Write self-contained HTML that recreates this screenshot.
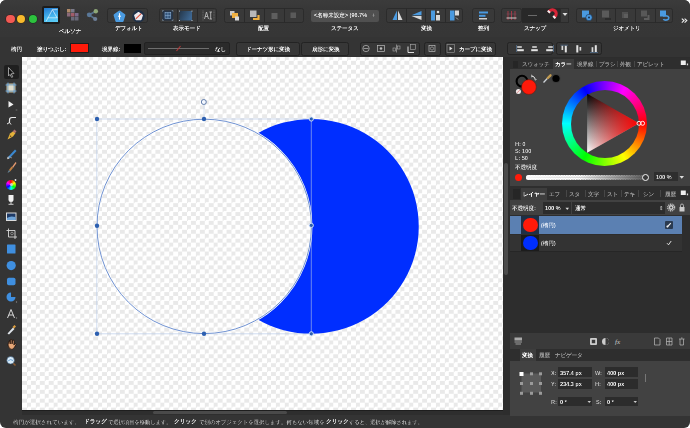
<!DOCTYPE html>
<html><head><meta charset="utf-8">
<style>
*{margin:0;padding:0;box-sizing:border-box}
html,body{width:690px;height:428px;overflow:hidden;background:#fff}
body{font-family:"Liberation Sans",sans-serif;color:#ddd;position:relative}
.a{position:absolute}
#win{position:absolute;left:0;top:0;width:690px;height:428px;background:#343434;border-radius:6px;overflow:hidden}
.t{position:absolute;font-size:12px;font-weight:bold;color:#f0f0f0;white-space:nowrap;line-height:14px;transform:scale(0.46);transform-origin:0 0;will-change:transform}
.grp{position:absolute;background:#393939;top:8px;height:15px;border-radius:2.5px;border:0.6px solid #2b2b2b}
.sep{position:absolute;width:1px;background:#2a2a2a}
#canvas{position:absolute;left:22px;top:57px;width:481px;height:353px;background:conic-gradient(#e9e9e9 25%,#fff 0 50%,#e9e9e9 0 75%,#fff 0) 0.05px -1.05px/8.9px 8.9px;overflow:hidden}
svg{position:absolute;overflow:visible}
.st{position:absolute;top:418.5px;font-size:12px;line-height:14px;color:#c0c0c0;white-space:nowrap;transform:scale(0.44,0.46);transform-origin:0 0;will-change:transform}
.sb{position:absolute;top:418.3px;font-size:12px;line-height:14px;font-weight:bold;color:#f8f8f8;white-space:nowrap;transform:scale(0.475,0.475);transform-origin:0 0;will-change:transform}
</style></head><body>
<div id="win">
 <!-- ===== TOOLBAR ===== -->
 <div class="a" style="left:0;top:0;width:690px;height:37px;background:linear-gradient(#3b3b3b,#373737 30%,#363636)"></div>
 <div class="a" style="left:6.4px;top:14.5px;width:8.2px;height:8.2px;border-radius:50%;background:#f25a54;box-shadow:0 0 0 0.6px #3a1a1a"></div>
 <div class="a" style="left:17.3px;top:14.5px;width:8.2px;height:8.2px;border-radius:50%;background:#f8ba2d;box-shadow:0 0 0 0.6px #3a2a10"></div>
 <div class="a" style="left:28.5px;top:14.5px;width:8.2px;height:8.2px;border-radius:50%;background:#2dc23e;box-shadow:0 0 0 0.6px #10301a"></div>

 <!-- personas -->
 <div class="a" style="left:42px;top:6px;width:18px;height:18px;background:#1c1c1c;border-radius:2px"></div>
 <div class="a" style="left:44px;top:7.5px;width:14px;height:14.5px;background:linear-gradient(165deg,#2379cf,#47b8ef 60%,#5fd0f7)"></div>
 <svg style="left:44px;top:7.5px" width="14" height="15"><path d="M2.1 13.4 L8.4 1.7 L13.6 1.7 M3.6 9.8 L13.4 9.8 M8.4 1.7 L13.1 9.8" stroke="#fff" stroke-width="0.65" fill="none" opacity="0.9"/></svg>
 <svg style="left:66px;top:8px" width="14" height="13">
  <rect x="1" y="1" width="3.5" height="3.5" fill="#b08a6a"/><rect x="5" y="1" width="3.5" height="3.5" fill="#7a7a8a"/>
  <rect x="1" y="5" width="3.5" height="3.5" fill="#8a6a7a"/><rect x="5" y="5" width="3.5" height="3.5" fill="#a25d6a"/><rect x="9" y="5" width="3.5" height="3.5" fill="#7b6a8a"/>
  <rect x="5" y="9" width="3.5" height="3.5" fill="#6a6a7a"/><rect x="9" y="9" width="3.5" height="3.5" fill="#6a6a7a"/>
 </svg>
 <svg style="left:86px;top:8px" width="14" height="14">
  <path d="M3.2 6.8 L9.8 3.2 M3.2 6.8 L9.2 11" stroke="#56708a" stroke-width="1.6"/>
  <circle cx="3.2" cy="6.8" r="2.4" fill="#5a7898"/><circle cx="9.8" cy="3.2" r="2.2" fill="#8fa878"/><circle cx="9.2" cy="11" r="2.1" fill="#6d7f98"/>
 </svg>
 <div class="t" style="left:58.5px;top:28px">ペルソナ</div>

 <!-- default group -->
 <div class="grp" style="left:107px;width:41px"></div>
 <svg style="left:112.5px;top:9.5px" width="13" height="13"><path d="M6.5 1.6 L11.4 5.1 L9.6 10.9 L3.4 10.9 L1.6 5.1 Z" fill="#4b9be0" stroke="#4b9be0" stroke-width="2" stroke-linejoin="round"/><path d="M6.5 3.2 V9.6 M5 6.2 H8" stroke="#fff" stroke-width="1"/></svg>
 <svg style="left:132px;top:9.5px" width="13" height="13"><circle cx="6.5" cy="6.3" r="6.2" fill="#1f3047"/><path d="M6.5 2.6 L10.2 5.3 L8.8 9.6 L4.2 9.6 L2.8 5.3 Z" fill="#eceaf0" stroke="#eceaf0" stroke-width="1.4" stroke-linejoin="round"/><path d="M3.8 8.8 L9.2 3.6" stroke="#e0503a" stroke-width="1.1"/></svg>
 <div class="t" style="left:114.5px;top:25px">デフォルト</div>

 <!-- view mode group -->
 <div class="grp" style="left:159px;width:58px"></div>
 <div class="sep" style="left:177px;top:8px;height:15px"></div>
 <div class="sep" style="left:197px;top:8px;height:15px"></div>
 <svg style="left:161px;top:9px" width="14" height="13"><rect x="1.5" y="1.5" width="10.5" height="10" fill="#263548"/><rect x="4" y="3.5" width="5.8" height="6" fill="#34557a" stroke="#9cc0e6" stroke-width="0.5"/><path d="M4 6.5 H9.8 M6.9 3.5 V9.5" stroke="#9cc0e6" stroke-width="0.45"/><path d="M1.5 1.5h1.3M1.5 1.5v1.3M12 1.5h-1.3M12 1.5v1.3M1.5 11.5h1.3M1.5 11.5v-1.3M12 11.5h-1.3M12 11.5v-1.3" stroke="#8a9aaa" stroke-width="0.6"/></svg>
 <svg style="left:178px;top:9px" width="16" height="13"><defs><linearGradient id="vg2" x1="0" x2="1" y1="0" y2="0.4"><stop offset="0" stop-color="#25374a"/><stop offset="1" stop-color="#3d6690"/></linearGradient></defs><rect x="1.5" y="2" width="12.5" height="9.5" fill="url(#vg2)"/><g fill="#c8d4e0"><circle cx="1.5" cy="2" r="0.6"/><circle cx="14" cy="2" r="0.6"/><circle cx="1.5" cy="11.5" r="0.6"/><circle cx="14" cy="11.5" r="0.6"/></g></svg>
 <svg style="left:201px;top:9px" width="15" height="13"><path d="M2 1.5 V11.5 M13 1.5 V11.5" stroke="#8a8a8a" stroke-width="0.6" stroke-dasharray="1 0.6"/><path d="M3.5 10 L5.5 3 L7.5 10 M4.2 7.5 H6.8 M8.5 3 H11 M9.7 3 V10 M8.5 10 H11" stroke="#c8c8c8" stroke-width="0.8" fill="none"/></svg>
 <div class="t" style="left:172.5px;top:25px">表示モード</div>

 <!-- arrange group -->
 <div class="grp" style="left:224px;width:80px"></div>
 <div class="sep" style="left:244px;top:8px;height:15px"></div>
 <div class="sep" style="left:264px;top:8px;height:15px"></div>
 <div class="sep" style="left:284px;top:8px;height:15px"></div>
 <svg style="left:228px;top:9px" width="13" height="13"><rect x="2" y="2" width="4.5" height="4.5" fill="#c9c9c9"/><rect x="4" y="4" width="6" height="5" fill="#f0b040"/><rect x="7" y="7.5" width="4" height="4" fill="#dcdcdc"/></svg>
 <svg style="left:248px;top:9px" width="13" height="13"><rect x="2" y="1.5" width="6.5" height="6.5" fill="#b8b8b8"/><path d="M10.5 6 V10 H5" stroke="#f0b040" stroke-width="2.2" fill="none"/></svg>
 <svg style="left:268px;top:9px" width="13" height="13"><rect x="3.5" y="4" width="6" height="6" fill="#5e5e5e"/></svg>
 <svg style="left:287px;top:9px" width="13" height="13"><rect x="3.5" y="3.5" width="5.5" height="5.5" fill="#5a5a5a"/></svg>
 <div class="t" style="left:257.5px;top:25px">配置</div>

 <!-- status -->
 <div class="a" style="left:311px;top:9.5px;width:68px;height:12px;background:#505050;border-radius:2px"></div>
 <div class="t" style="left:313.5px;top:12px;color:#e0e0e0">&lt;名称未設定&gt; (96.7%</div>
 <div class="t" style="left:372px;top:12px;color:#9a9a9a">+</div>
 <div class="t" style="left:331px;top:25px">ステータス</div>

 <!-- transform group -->
 <div class="grp" style="left:386px;width:77px"></div>
 <div class="sep" style="left:406px;top:8px;height:15px"></div>
 <div class="sep" style="left:425px;top:8px;height:15px"></div>
 <div class="sep" style="left:445px;top:8px;height:15px"></div>
 <svg style="left:391px;top:9px" width="13" height="13"><path d="M6 1.5 L1.5 11 H6 Z" fill="#4a9ae0"/><path d="M7 1.5 L11.5 11 H7 Z" fill="#d8d8d8"/></svg>
 <svg style="left:410px;top:9px" width="13" height="13"><path d="M11.5 2 L1.5 6.2 H11.5 Z" fill="#4a9ae0"/><path d="M11.5 11 L1.5 7 H11.5 Z" fill="#d8d8d8"/></svg>
 <svg style="left:429px;top:9px" width="13" height="13"><rect x="2" y="1.5" width="4" height="10" fill="#4a9ae0"/><rect x="7" y="6" width="4" height="5.5" fill="#d8d8d8"/><circle cx="9" cy="3" r="1.3" fill="#d8d8d8"/></svg>
 <svg style="left:448px;top:9px" width="13" height="13"><rect x="2" y="1.5" width="4.5" height="10" fill="#4a9ae0"/><rect x="7" y="1.5" width="4" height="5" fill="#d8d8d8"/><path d="M8 8.5 L10 10.5" stroke="#ccc" stroke-width="0.8"/></svg>
 <div class="t" style="left:420.5px;top:25px">変換</div>

 <!-- align group -->
 <div class="grp" style="left:472px;width:23px"></div>
 <svg style="left:477px;top:9px" width="13" height="13"><rect x="2" y="2.5" width="9" height="2" fill="#4a9ae0"/><rect x="2" y="5.8" width="6.5" height="2" fill="#4a9ae0"/><rect x="2" y="9" width="8" height="1.5" fill="#d0d0d0"/></svg>
 <div class="t" style="left:478px;top:25px">整列</div>

 <!-- snap group -->
 <div class="grp" style="left:501px;width:21px"></div>
 <div class="a" style="left:522px;top:8px;width:38px;height:15px;background:#282828"></div>
 <div class="grp" style="left:560px;width:9px;border-radius:0"></div>
 <svg style="left:505px;top:9px" width="13" height="13"><path d="M3 2 V11 M6.5 2 V11 M10 2 V11" stroke="#b03848" stroke-width="0.9"/><path d="M1.5 9 H11.5" stroke="#cfcfcf" stroke-width="1"/><path d="M1.5 5 H11.5" stroke="#7a5060" stroke-width="0.6"/></svg>
 <div class="a" style="left:527.5px;top:14.5px;width:9px;height:1.5px;background:#6a6a6a"></div>
 <svg style="left:544px;top:8px;transform:rotate(90deg)" width="14" height="14"><path d="M3.2 10.8 L1.8 9.4 A4.6 4.6 0 0 1 9.4 1.8 L10.8 3.2 L8.6 5.4 L7.2 4 A1.6 1.6 0 0 0 4 7.2 L5.4 8.6 Z" fill="#d92638"/><path d="M1.9 9.5 L3.3 10.9 L5.5 8.7 L4.1 7.3 Z M7.3 4.1 L8.7 5.5 L10.9 3.3 L9.5 1.9 Z" fill="#f0f0f0"/></svg>
 <svg style="left:562px;top:12px" width="6" height="5"><path d="M0.5 1 L5.5 1 L3 4 Z" fill="#ddd"/></svg>
 <div class="t" style="left:524px;top:25px">スナップ</div>

 <!-- geometry group -->
 <div class="grp" style="left:576px;width:97px"></div>
 <div class="sep" style="left:596px;top:8px;height:15px"></div>
 <div class="sep" style="left:615px;top:8px;height:15px"></div>
 <div class="sep" style="left:635px;top:8px;height:15px"></div>
 <div class="sep" style="left:655px;top:8px;height:15px"></div>
 <svg style="left:580px;top:9px" width="13" height="13"><rect x="2" y="1.5" width="7" height="7" fill="#4a9ae0"/><circle cx="9" cy="8.5" r="3.2" fill="#4a9ae0" stroke="#1a3050" stroke-width="0.6"/><circle cx="9" cy="8.5" r="1" fill="#1a3050"/></svg>
 <svg style="left:600px;top:9px" width="13" height="13"><rect x="2" y="1.5" width="7" height="7" fill="#5a5a5a"/><path d="M5 10 H11" stroke="#1f1f1f" stroke-width="1"/></svg>
 <svg style="left:619px;top:9px" width="13" height="13"><rect x="3" y="3" width="6" height="6" fill="#505050"/><rect x="5" y="5" width="4" height="4" fill="#5e5e5e"/></svg>
 <svg style="left:639px;top:9px" width="13" height="13"><rect x="2" y="1.5" width="6" height="6" fill="#585858"/><path d="M9.5 6 V10 H5" stroke="#5e5e5e" stroke-width="2" fill="none"/></svg>
 <svg style="left:658px;top:9px" width="13" height="13"><rect x="2" y="1.5" width="6" height="6" fill="#4a9ae0"/><path d="M5 7 C10 6 11.5 8 10.5 10 C9.5 11.5 6 11.5 5.5 10" stroke="#4a9ae0" stroke-width="1.6" fill="none"/></svg>
 <div class="t" style="left:612.5px;top:25px">ジオメトリ</div>
 <svg style="left:680.5px;top:18px" width="8" height="6"><path d="M0.8 0.6 L3 2.6 L0.8 4.6 M3.6 0.6 L5.8 2.6 L3.6 4.6" stroke="#f0f0f0" stroke-width="1.1" fill="none"/></svg>

 <!-- ===== CONTEXT BAR ===== -->
 <div class="t" style="left:10.5px;top:46px">楕円</div>
  <div class="t" style="left:37px;top:46px">塗りつぶし:</div>
 <div class="a" style="left:69.5px;top:43.4px;width:19.3px;height:10px;background:#ff1a0a;border:0.6px solid #1e1e1e"></div>
 <div class="t" style="left:102px;top:46px">境界線:</div>
 <div class="a" style="left:124px;top:43.8px;width:16.6px;height:9.5px;background:#000"></div>
 <div class="a" style="left:143.5px;top:42px;width:86px;height:13px;background:#2b2b2b;border:0.6px solid #222;border-radius:2px"></div>
 <div class="a" style="left:148px;top:48.2px;width:61px;height:1px;background:#6e6e6e"></div>
 <svg style="left:174px;top:44px" width="9" height="9"><path d="M2.5 7 L6.5 2" stroke="#b83838" stroke-width="1.1"/></svg>
 <div class="t" style="left:214.5px;top:46px">なし</div>

 <div class="a" style="left:236px;top:41.5px;width:64px;height:14px;background:#373737;border:0.8px solid #232323;border-radius:2.5px"></div>
 <div class="t" style="left:246px;top:46px">ドーナツ形に変換</div>
 <div class="a" style="left:301px;top:41.5px;width:48px;height:14px;background:#373737;border:0.8px solid #232323;border-radius:2.5px"></div>
 <div class="t" style="left:312px;top:46px">扇形に変換</div>

 <div class="a" style="left:360px;top:41.5px;width:60px;height:14px;background:#373737;border:0.8px solid #232323;border-radius:2.5px"></div>
 <svg style="left:361px;top:43px" width="60" height="11">
  <circle cx="5" cy="5.5" r="3.2" stroke="#bbb" stroke-width="0.7" fill="none"/><path d="M2.5 5.5 H7.5" stroke="#bbb" stroke-width="0.7"/>
  <rect x="16.5" y="2.5" width="7" height="6" stroke="#bbb" stroke-width="0.7" fill="none"/><circle cx="20" cy="5.5" r="1.3" fill="#bbb"/>
  <path d="M35.5 1.5 V9.5" stroke="#aaa" stroke-width="0.7"/><rect x="32" y="5" width="2.5" height="3" fill="none" stroke="#aaa" stroke-width="0.6"/><rect x="36.5" y="3" width="2.5" height="3" fill="none" stroke="#aaa" stroke-width="0.6"/>
  <rect x="49.5" y="1.5" width="5" height="5" stroke="#aaa" stroke-width="0.6" fill="none"/><path d="M47 3.5 V9.5 H53" stroke="#eee" stroke-width="0.9" fill="none"/>
 </svg>
 <div class="a" style="left:424px;top:41.5px;width:16.5px;height:14px;background:#373737;border:0.8px solid #232323;border-radius:2.5px"></div>
 <svg style="left:426px;top:43px" width="12" height="11"><rect x="3" y="2.5" width="6" height="6" stroke="#bbb" stroke-width="0.7" fill="none"/><circle cx="6" cy="5.5" r="1.6" stroke="#bbb" stroke-width="0.6" fill="none"/></svg>
 <div class="a" style="left:445px;top:41.5px;width:51px;height:14px;background:#373737;border:0.8px solid #232323;border-radius:2.5px"></div>
 <svg style="left:446px;top:43px" width="10" height="11"><rect x="1" y="1.5" width="7.5" height="8" stroke="#999" stroke-width="0.6" fill="none"/><path d="M3.5 3.5 L6.5 5.5 L3.5 7.5 Z" fill="#ddd"/></svg>
 <div class="t" style="left:459px;top:46px">カーブに変換</div>

 <!-- align buttons in right context -->
 <div class="a" style="left:507.2px;top:42px;width:46.2px;height:12.7px;background:#373737;border:0.8px solid #232323;border-radius:2.5px"></div>
 <div class="a" style="left:555.8px;top:42px;width:46.2px;height:12.7px;background:#373737;border:0.8px solid #232323;border-radius:2.5px"></div>
 <svg style="left:505px;top:40px" width="100" height="16">
  <path d="M11.5 5 V12" stroke="#5a7fa8" stroke-width="0.6"/>
  <rect x="12.2" y="6.2" width="4.6" height="1.6" fill="#d8d8d8"/><rect x="12.2" y="9.2" width="6.6" height="2" fill="#e4e4e4"/>
  <rect x="27.2" y="6.2" width="4.6" height="1.6" fill="#d8d8d8"/><rect x="26.2" y="9.2" width="6.6" height="2" fill="#e4e4e4"/>
  <path d="M48.5 5 V12" stroke="#5a7fa8" stroke-width="0.6"/>
  <rect x="43.2" y="6.2" width="4.6" height="1.6" fill="#d8d8d8"/><rect x="41.2" y="9.2" width="6.6" height="2" fill="#e4e4e4"/>
  <path d="M55.5 5.2 H63" stroke="#5a7fa8" stroke-width="0.6"/>
  <rect x="56.5" y="5.8" width="1.7" height="4.2" fill="#d8d8d8"/><rect x="59.8" y="5.8" width="2" height="6.6" fill="#e4e4e4"/>
  <rect x="71.3" y="5.2" width="2" height="7.3" fill="#e4e4e4"/><rect x="74.5" y="7" width="1.7" height="3.6" fill="#d8d8d8"/>
  <path d="M85 12.5 H93" stroke="#5a7fa8" stroke-width="0.6"/>
  <rect x="86.6" y="7.2" width="1.7" height="4.8" fill="#d8d8d8"/><rect x="89.8" y="5.2" width="2" height="6.8" fill="#e4e4e4"/>
 </svg>

 <!-- ===== LEFT TOOLS ===== -->
 <div class="a" style="left:4px;top:65px;width:15px;height:13.5px;background:#1f1f1f;border-radius:2px"></div>
 <svg style="left:0;top:57px" width="22" height="320">
  <!-- move (y 14.5) -->
  <path d="M8.5 10.5 L14 16.5 L11.2 16.8 L12.8 19.8 L11.6 20.4 L10 17.4 L8.5 19 Z" fill="#111" stroke="#a8a8a8" stroke-width="0.9" stroke-linejoin="round"/>
  <!-- artboard (31) -->
  <rect x="6.5" y="26.5" width="9" height="9" fill="#cdbf9a"/>
  <path d="M5.5 28 H16.5 M5.5 34 H16.5 M8 25.5 V36.5 M14 25.5 V36.5" stroke="#5a9ad8" stroke-width="0.9"/>
  <rect x="8.5" y="28.5" width="5" height="5" fill="#e0dccb"/>
  <!-- node (47.5) -->
  <path d="M8.5 44 L13.5 47.5 L8.5 50.5 Z" fill="#f0f0f0"/>
  <circle cx="16.5" cy="53" r="1" fill="#555"/>
  <!-- corner (63) -->
  <path d="M16 60.5 H12 Q9.5 60.5 9.5 63 V66" stroke="#e8e8e8" stroke-width="1.2" fill="none"/>
  <path d="M7 67 L9.5 65.5 L11 67.5" stroke="#e8e8e8" stroke-width="1" fill="none"/>
  <!-- pen (78) -->
  <path d="M7.5 82.5 L10 76.5 L13.5 74 L15.5 76 L13 79.5 Z" fill="#e4b23a"/>
  <path d="M12.5 74.5 L14.5 72.5 L16.5 74.5 L15 76" fill="#b0706a"/>
  <circle cx="10.6" cy="79.3" r="0.8" fill="#6a4a1a"/>
  <!-- pencil (95.5) -->
  <path d="M8 100 L15 92.5 L16.5 94 L9.5 101.5 Z" fill="#3a88d0"/>
  <path d="M8 100 L9.5 101.5 L7 102.3 Z" fill="#ddd"/>
  <path d="M7 100.5 Q10 99 12 101" stroke="#ddd" stroke-width="0.5" fill="none"/>
  <!-- brush (111) -->
  <path d="M12 110 L15.5 105 L16.5 106 L13 111 Z" fill="#e59a70"/>
  <path d="M9 113 L11.5 109.5 L13 111 L10 114.5 Z" fill="#c08040"/>
  <path d="M7.5 116 L9 113 L10 114.5 Z" fill="#6a8aa0"/>
  <!-- color wheel (127.5) -->
    <circle cx="15.5" cy="123" r="0.9" fill="#eee"/>
  <!-- transparency (142.5) -->
  <path d="M8.5 138 H13.5 V142.5 Q13.5 145 11 145 Q8.5 145 8.5 142.5 Z" fill="#f0f0f0"/>
  <path d="M11 145 V147 M8.5 147.3 H13.5" stroke="#e0e0e0" stroke-width="0.9"/>
  <!-- place image (159.8) -->
  <rect x="6" y="155.5" width="10.5" height="8.5" fill="#dcdcdc"/>
  <rect x="7" y="156.5" width="8.5" height="6.5" fill="#1e3a66"/>
  <path d="M7 161 Q10 158.5 15.5 160 V163 H7 Z" fill="#6ea4d8"/>
  <!-- crop (176) -->
  <path d="M8.5 171.5 V180 H17 M6.5 173.5 H15 V182" stroke="#d8d8d8" stroke-width="0.9" fill="none"/>
  <circle cx="12" cy="176.5" r="1.3" fill="none" stroke="#bbb" stroke-width="0.6"/>
  <!-- rectangle (192) -->
  <rect x="7" y="187.5" width="8.5" height="9" fill="#3f8fe0" rx="0.5"/>
  <!-- ellipse (208.5) -->
  <circle cx="11.2" cy="208.6" r="4.6" fill="#3f8fe0"/>
  <!-- rounded rect (224.5) -->
  <rect x="7" y="220.8" width="8.5" height="7.5" rx="1.8" fill="#3f8fe0"/>
  <!-- pie (240) -->
  <path d="M11 240 L15.5 240 A4.5 4.5 0 1 1 11 235.5 Z" fill="#3f8fe0"/>
  <circle cx="16.5" cy="245" r="0.7" fill="#888"/>
  <!-- text (257) -->
  <path d="M7.5 261 L11 252.5 L14.5 261 M8.8 258 H13.2" stroke="#e8e8e8" stroke-width="0.9" fill="none"/>
  <circle cx="16.5" cy="261" r="0.7" fill="#888"/>
  <!-- fill/eyedropper (271.7) -->
  <path d="M7.5 276.5 L13 270.5 L14.5 272 L9 277.5 Z" fill="#dfe4ea"/>
  <path d="M12.5 270 L14.5 268 L16 269.5 L14 271.5 Z" fill="#e0a040"/>
  <!-- hand (288) -->
  <path d="M8 288 Q8.5 284.5 9.5 283.5 L10.2 287 L10.5 282.5 L11.8 282.5 L12 287 L13 283 L14.2 283.5 L13.8 288 L15.5 286.5 L16 287.3 Q14.5 291.5 12 292.5 Q9 292.5 8 288 Z" fill="#e8a878" stroke="#1a0a05" stroke-width="0.7"/>
  <!-- zoom (304) -->
  <path d="M13 306 L15.5 308.5" stroke="#8a5a30" stroke-width="1.6"/>
  <circle cx="10.6" cy="303.3" r="3.8" fill="#d8ecfa" stroke="#2a4a6a" stroke-width="0.6"/>
  <path d="M8.2 303.8 Q10.5 301.5 13 303.5" stroke="#6aa0d0" stroke-width="1" fill="none"/>
  <defs><radialGradient id="dummy"/></defs>
 </svg>
 <div class="a" style="left:6px;top:179.5px;width:10px;height:10px;border-radius:50%;background:conic-gradient(#f00,#ff0,#0f0,#0ff,#00f,#f0f,#f00)"></div>
 <div class="a" style="left:9.5px;top:183px;width:3px;height:3px;border-radius:50%;background:#ccc"></div>

 <!-- ===== CANVAS ===== -->
 <div id="canvas">
  <svg width="481" height="353" style="left:0;top:0">
   <path d="M235.8 76.3 A107.4 107.4 0 1 1 235.8 262.5 A107.4 107.4 0 0 0 235.8 76.3 Z" fill="#002eff"/>
   <path d="M74.8 62 H289.3 V276.8 H74.8 Z" fill="none" stroke="#b0c4e6" stroke-width="0.6"/>
   <circle cx="182.2" cy="169.4" r="107.2" fill="none" stroke="#fff" stroke-width="2"/>
   <circle cx="182.2" cy="169.4" r="107.2" fill="none" stroke="#3f6cc0" stroke-width="0.75"/>
   <path d="M182 62 V47.5" stroke="#c4d4ee" stroke-width="0.6"/>
   <circle cx="181.8" cy="45" r="2.5" fill="#f4f8ff" stroke="#3d5f98" stroke-width="0.8"/>
   <g fill="#2c5fb0">
    <circle cx="75" cy="62" r="2.2"/><circle cx="182" cy="62" r="2.2"/>
    <circle cx="75" cy="168.8" r="2.2"/>
    <circle cx="75" cy="276.8" r="2.2"/><circle cx="182" cy="276.8" r="2.2"/>
   </g>
   <g fill="#2c5fb0" stroke="#d8e6ff" stroke-width="0.9">
    <circle cx="289.3" cy="62" r="2.1"/><circle cx="289.3" cy="168.4" r="2.1"/><circle cx="289.3" cy="276.8" r="2.1"/>
   </g>
  </svg>
 </div>
 <!-- canvas bottom strip + scrollbar -->
 <div class="a" style="left:22px;top:410px;width:481px;height:5px;background:#2e2e2e;border-top:0.6px solid #1e1e1e"></div>
 <div class="a" style="left:153px;top:411.3px;width:133.5px;height:3.2px;background:#4a4a4a;border-radius:1.5px"></div>

 <!-- ===== RIGHT PANEL ===== -->
 <div class="a" style="left:503px;top:57px;width:187px;height:358px;background:#2d2d2d"></div>
 <div class="a" style="left:504px;top:162.6px;width:4.2px;height:112px;background:#4c4c4c;border-radius:2px"></div>

 <!-- colour panel -->
 <div class="a" style="left:510px;top:58px;width:180px;height:11px;background:#2e2e2e"></div>
 <div class="a" style="left:510px;top:69px;width:180px;height:117px;background:#414141"></div>
 <div class="a" style="left:553.3px;top:58.5px;width:20.7px;height:10.5px;background:#3d3d3d"></div>
 <div class="t" style="left:522px;top:61px;color:#9a9a9a">スウォッチ</div>
 <div class="t" style="left:555px;top:61px;color:#fff">カラー</div>
 <div class="t" style="left:577px;top:61px;color:#9a9a9a">境界線</div>
 <div class="t" style="left:598.5px;top:61px;color:#9a9a9a">ブラシ</div>
 <div class="t" style="left:620px;top:61px;color:#9a9a9a">外観</div>
 <div class="t" style="left:637px;top:61px;color:#9a9a9a">アピレット</div>
 <svg style="left:680px;top:60px" width="10" height="8"><rect x="0.8" y="0.5" width="5" height="4.5" fill="#eee"/><rect x="6.8" y="3.5" width="1.3" height="1.8" fill="#ddd"/></svg>

 <svg style="left:510px;top:69px" width="180" height="117">
  <circle cx="12" cy="12.2" r="5.4" fill="none" stroke="#000" stroke-width="2.1"/>
  <circle cx="18.9" cy="18" r="7.4" fill="#ff1a0a" stroke="#5a1a10" stroke-width="0.5"/>
  <path d="M21.5 7 Q24.5 7 25.5 10.5" stroke="#e0e0e0" stroke-width="1" fill="none"/><path d="M21 5.8 L22.5 7 L21 8.2 M24.3 10 L25.5 11.2 L26.6 10" stroke="#e0e0e0" stroke-width="0.7" fill="none"/>
  <circle cx="8.4" cy="22.5" r="2.5" fill="#f0e8e8"/><path d="M7 23.9 L9.8 21.1" stroke="#d44" stroke-width="0.5"/>
  <path d="M33.5 13.5 L38.5 8.3" stroke="#cfd4da" stroke-width="1.3"/><path d="M37.8 9 L40.5 6.3" stroke="#c09a50" stroke-width="2.4" stroke-linecap="round"/>
  <circle cx="46" cy="9.5" r="4.6" fill="#3a3a3a"/>
  <circle cx="46" cy="9.5" r="3.6" fill="#000"/>
 </svg>
 <div class="a" id="wheel" style="left:562px;top:81px;width:85px;height:85px;border-radius:50%;background:conic-gradient(from 90deg,#f00,#ff0,#0f0,#0ff,#00f,#f0f,#f00)"></div>
 <div class="a" style="left:570.5px;top:89.5px;width:68px;height:68px;border-radius:50%;background:#414141"></div>
 <svg style="left:510px;top:69px" width="180" height="117">
  <defs>
   <linearGradient id="tg1" x1="0" y1="0" x2="0" y2="1"><stop offset="0" stop-color="#000"/><stop offset="1" stop-color="#fff"/></linearGradient>
   <linearGradient id="tg2" x1="0" y1="0" x2="1" y2="0"><stop offset="0" stop-color="#f00" stop-opacity="0"/><stop offset="1" stop-color="#f00" stop-opacity="1"/></linearGradient>
  </defs>
  <path d="M77.1 24.8 L129 54.3 L77.1 83.7 Z" fill="url(#tg1)"/>
  <path d="M77.1 24.8 L129 54.3 L77.1 83.7 Z" fill="url(#tg2)" style="mix-blend-mode:normal"/>
  <circle cx="129" cy="54.3" r="2" fill="none" stroke="#fff" stroke-width="0.9"/>
  <circle cx="132.6" cy="54.3" r="2" fill="none" stroke="#fff" stroke-width="0.9"/>
 </svg>
 <div class="t" style="left:514.5px;top:141px;color:#cfcfcf">H: 0</div>
 <div class="t" style="left:514.5px;top:148px;color:#cfcfcf">S: 100</div>
 <div class="t" style="left:514.5px;top:155px;color:#cfcfcf">L: 50</div>
 <div class="t" style="left:514.5px;top:164px;color:#cfcfcf">不透明度</div>
 <div class="a" style="left:515px;top:173.5px;width:7px;height:7px;border-radius:50%;background:#ff1a0a"></div>
 <div class="a" style="left:525.7px;top:174.5px;width:119px;height:5px;border-radius:2.5px;background:conic-gradient(#aaa 25%,#fff 0 50%,#aaa 0 75%,#fff 0) 0 0/2.5px 2.5px"></div>
 <div class="a" style="left:525.7px;top:174.5px;width:119px;height:5px;border-radius:2.5px;background:linear-gradient(90deg,rgba(255,255,255,0.85),rgba(255,255,255,0.1) 45%,rgba(40,40,40,0.75))"></div>
 <div class="a" style="left:641.7px;top:173.5px;width:7px;height:7px;border-radius:50%;border:1.1px solid #f4f4f4;background:#3a3a3a"></div>
 <div class="a" style="left:653.5px;top:172.3px;width:24px;height:8.5px;background:#2e2e2e"></div>
 <div class="t" style="left:656px;top:173.5px;color:#ddd">100 %</div>
 <svg style="left:679px;top:175px" width="6" height="5"><path d="M0.5 1 L5 1 L2.75 3.8 Z" fill="#ddd"/></svg>

 <!-- layers panel -->
 <div class="a" style="left:510px;top:186px;width:180px;height:14px;background:#2e2e2e"></div>
 <div class="a" style="left:513px;top:189px;width:7px;height:10px;background:#262626"></div>
 <div class="a" style="left:520.7px;top:188px;width:26px;height:12px;background:#3d3d3d"></div>
 <div class="t" style="left:522.5px;top:190.5px;color:#fff">レイヤー</div>
 <div class="t" style="left:549px;top:190.5px;color:#9a9a9a">エフ</div>
 <div class="t" style="left:569px;top:190.5px;color:#9a9a9a">スタ</div>
 <div class="t" style="left:588px;top:190.5px;color:#9a9a9a">文字</div>
 <div class="t" style="left:607px;top:190.5px;color:#9a9a9a">スト</div>
 <div class="t" style="left:624px;top:190.5px;color:#9a9a9a">テキ</div>
 <div class="t" style="left:643px;top:190.5px;color:#9a9a9a">シン</div>
 <div class="t" style="left:664.5px;top:190.5px;color:#9a9a9a">履歴</div>
 <svg style="left:680px;top:189.5px" width="10" height="8"><rect x="0.8" y="0.5" width="5" height="4.5" fill="#eee"/><rect x="6.8" y="3.5" width="1.3" height="1.8" fill="#ddd"/></svg>
 <div class="a" style="left:510px;top:200px;width:180px;height:15px;background:#414141"></div>
 <div class="t" style="left:511.7px;top:205px;color:#d8d8d8">不透明度:</div>
 <div class="a" style="left:542.5px;top:201.5px;width:28px;height:12px;background:#2c2c2c"></div>
 <div class="t" style="left:545px;top:205px;color:#eee">100 %</div>
 <svg style="left:565px;top:206.5px" width="5" height="4"><path d="M0.5 0.8 L4 0.8 L2.25 3 Z" fill="#ddd"/></svg>
 <div class="a" style="left:572px;top:201.5px;width:92.5px;height:12px;background:#2c2c2c"></div>
 <div class="t" style="left:574.7px;top:205px;color:#eee">通常</div>
 <div class="t" style="left:659px;top:205px;color:#aaa">⇕</div>
 <svg style="left:666px;top:202px" width="24" height="11"><circle cx="5.2" cy="5.5" r="3.4" fill="none" stroke="#d0d0d0" stroke-width="1.3" stroke-dasharray="1.1 0.68"/><circle cx="5.2" cy="5.5" r="2.4" fill="#d0d0d0"/><circle cx="5.2" cy="5.5" r="1" fill="#414141"/><rect x="13.5" y="5" width="5" height="4.5" fill="#ccc"/><path d="M14.5 5 V3.5 A1.5 1.5 0 0 1 17.5 3.5 V5" stroke="#ccc" stroke-width="0.8" fill="none"/></svg>
 <div class="a" style="left:510px;top:215px;width:172px;height:118px;background:#2d2d2d"></div>
 <div class="a" style="left:510px;top:234.5px;width:172px;height:16.8px;background:#333"></div>
 <div class="a" style="left:510.4px;top:216.2px;width:171.6px;height:17.4px;background:#5b80b2"></div>
 <div class="a" style="left:521px;top:216.2px;width:17.5px;height:17.4px;background:#1e2f46"></div>
 <div class="a" style="left:523px;top:217.5px;width:14.5px;height:14.5px;border-radius:50%;background:#ff1a0a"></div>
 <div class="t" style="left:541.2px;top:221.5px;color:#e8eef8">(楕円)</div>
 <div class="a" style="left:664.5px;top:220.5px;width:8px;height:8px;background:#2a3a50;border-radius:1px"></div>
 <svg style="left:664.5px;top:220.5px" width="8" height="8"><path d="M2.2 6 L5.8 2.2" stroke="#eee" stroke-width="1.1"/><circle cx="2.4" cy="5.6" r="1" fill="#eee"/></svg>
 <div class="a" style="left:521px;top:234.5px;width:17.5px;height:17px;background:#1c1c1c"></div>
 <div class="a" style="left:523px;top:235.8px;width:14.5px;height:14.5px;border-radius:50%;background:#002eff"></div>
 <div class="t" style="left:541.2px;top:240px;color:#ddd">(楕円)</div>
 <svg style="left:664.5px;top:239px" width="8" height="8"><path d="M2 4.2 L3.5 5.8 L6.2 2" stroke="#eee" stroke-width="0.9" fill="none"/></svg>
 <div class="a" style="left:510px;top:251.2px;width:172px;height:0.8px;background:#262626"></div>

 <div class="a" style="left:596px;top:61px;width:0.7px;height:6px;background:#474747"></div>
 <div class="a" style="left:616.8px;top:61px;width:0.7px;height:6px;background:#474747"></div>
 <div class="a" style="left:634px;top:61px;width:0.7px;height:6px;background:#474747"></div>
 <div class="a" style="left:566px;top:190px;width:0.7px;height:7px;background:#474747"></div>
 <div class="a" style="left:585px;top:190px;width:0.7px;height:7px;background:#474747"></div>
 <div class="a" style="left:603.5px;top:190px;width:0.7px;height:7px;background:#474747"></div>
 <div class="a" style="left:620.5px;top:190px;width:0.7px;height:7px;background:#474747"></div>
 <div class="a" style="left:638.4px;top:190px;width:0.7px;height:7px;background:#474747"></div>
 <div class="a" style="left:659.7px;top:190px;width:0.7px;height:7px;background:#474747"></div>
 <div class="a" style="left:513px;top:60.5px;width:5px;height:7px;background:#262626"></div>
 <!-- layer footer -->
 <div class="a" style="left:510px;top:333px;width:180px;height:15.5px;background:#3a3a3a"></div>
 <svg style="left:510px;top:334px" width="180" height="14">
  <path d="M4.5 3.5 H12 V6.5 H4.5 Z" fill="#aaa"/><path d="M4.5 8 H12 M5.5 10 H11" stroke="#aaa" stroke-width="0.9"/>
  <rect x="80" y="4" width="7" height="7" rx="1" fill="#ccc"/><rect x="81.8" y="5.8" width="3.4" height="3.4" fill="#3a3a3a"/>
  <circle cx="95.5" cy="7.5" r="3.5" fill="#ccc"/><path d="M95.5 4 A3.5 3.5 0 0 1 95.5 11 Z" fill="#3a3a3a"/>
  <text x="105" y="10" font-size="7" font-style="italic" fill="#ccc" font-family="Liberation Serif">fx</text>
  <path d="M144.5 4 H148.5 L150 5.5 V11 H144.5 Z" stroke="#bbb" stroke-width="0.7" fill="none"/>
  <path d="M156.5 4 H162 V11 H156.5 Z M159.2 4 V11 M156.5 7.5 H162" stroke="#bbb" stroke-width="0.7" fill="none"/>
  <path d="M169 5 H174.5 M170 5 V11 H173.5 V5 M171 4 H172.5" stroke="#bbb" stroke-width="0.7" fill="none"/>
 </svg>

 <!-- transform panel -->
 <div class="a" style="left:510px;top:348.5px;width:180px;height:12.5px;background:#2e2e2e"></div>
 <div class="a" style="left:519.5px;top:349px;width:16.5px;height:12px;background:#3d3d3d"></div>
 <div class="t" style="left:522px;top:352px;color:#fff">変換</div>
 <div class="t" style="left:538.6px;top:352px;color:#9a9a9a">履歴</div>
 <div class="t" style="left:555px;top:352px;color:#9a9a9a">ナビゲータ</div>
 <div class="a" style="left:510px;top:361px;width:180px;height:55px;background:#424242"></div>
 <svg style="left:515px;top:368px" width="35" height="32">
  <rect x="6.5" y="5.5" width="19.5" height="19" fill="#5a5a5a"/>
  <rect x="4.5" y="4" width="4" height="4" fill="#fff"/>
  <g fill="#9a9a9a"><rect x="15" y="4.3" width="3" height="3"/><rect x="24" y="4.3" width="3" height="3"/>
  <rect x="5" y="14" width="3" height="3"/><rect x="15" y="14" width="3" height="3"/><rect x="24" y="14" width="3" height="3"/>
  <rect x="5" y="23.8" width="3" height="3"/><rect x="15" y="23.8" width="3" height="3"/><rect x="24" y="23.8" width="3" height="3"/></g>
 </svg>
 <div class="t" style="left:550.5px;top:369.5px;color:#bbb">X:</div>
 <div class="a" style="left:558px;top:367.3px;width:34.3px;height:10px;background:#2c2c2c"></div>
 <div class="t" style="left:560px;top:369.5px;color:#eee">357.4 px</div>
 <div class="t" style="left:594.5px;top:369.5px;color:#bbb">W:</div>
 <div class="a" style="left:604.7px;top:367.3px;width:33px;height:10px;background:#2c2c2c"></div>
 <div class="t" style="left:607px;top:369.5px;color:#eee">400 px</div>
 <div class="t" style="left:550.5px;top:380.5px;color:#bbb">Y:</div>
 <div class="a" style="left:558px;top:378.7px;width:34.3px;height:10px;background:#2c2c2c"></div>
 <div class="t" style="left:560px;top:380.5px;color:#eee">234.3 px</div>
 <div class="t" style="left:595px;top:380.5px;color:#bbb">H:</div>
 <div class="a" style="left:604.7px;top:378.7px;width:33px;height:10px;background:#2c2c2c"></div>
 <div class="t" style="left:607px;top:380.5px;color:#eee">400 px</div>
 <div class="a" style="left:644.5px;top:373.5px;width:1.5px;height:8px;background:#777"></div>
 <div class="t" style="left:550.5px;top:398.5px;color:#bbb">R:</div>
 <div class="a" style="left:558px;top:396.7px;width:34.3px;height:9.5px;background:#2c2c2c"></div>
 <div class="t" style="left:560px;top:398.5px;color:#eee">0 °</div>
 <svg style="left:587px;top:400px" width="5" height="4"><path d="M0.5 1 L4 1 L2.25 3 Z" fill="#ccc"/></svg>
 <div class="t" style="left:596px;top:398.5px;color:#bbb">S:</div>
 <div class="a" style="left:604.7px;top:396.7px;width:33px;height:9.5px;background:#2c2c2c"></div>
 <div class="t" style="left:607px;top:398.5px;color:#eee">0 °</div>
 <svg style="left:633px;top:400px" width="5" height="4"><path d="M0.5 1 L4 1 L2.25 3 Z" fill="#ccc"/></svg>

 <!-- status bar text -->
 <div class="st" style="left:13px;transform:scale(0.465,0.46)">楕円が選択されています。</div>
 <div class="sb" style="left:83.5px">ドラッグ</div>
 <div class="st" style="left:108.4px">で選択項目を移動します。</div>
 <div class="sb" style="left:174px">クリック</div>
 <div class="st" style="left:199px;transform:scale(0.455,0.46)">で別のオブジェクトを選択します。何もない領域を</div>
 <div class="sb" style="left:325.6px">クリック</div>
 <div class="st" style="left:349px">すると、選択が解除されます。</div>
</div>
</body></html>
